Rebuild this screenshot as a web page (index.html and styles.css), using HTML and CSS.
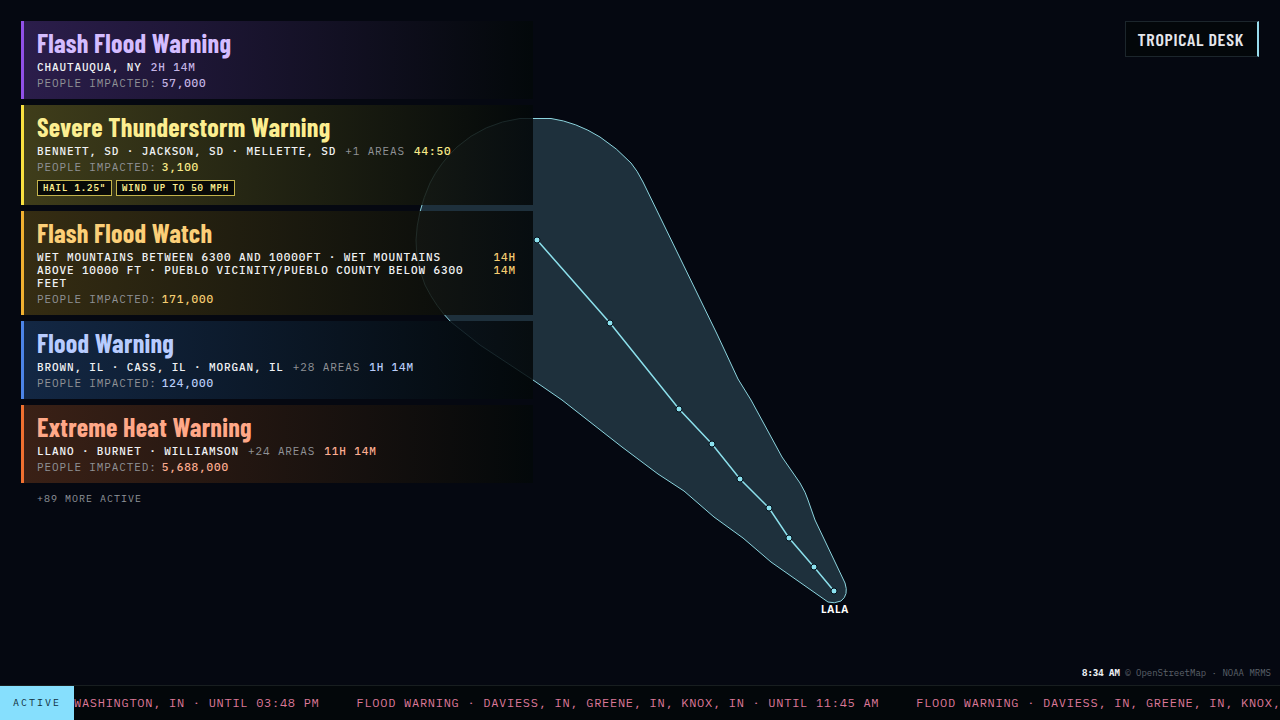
FILE: index.html
```html
<!DOCTYPE html>
<html lang="en">

<head>
    <meta charset="UTF-8">
    <meta name="viewport" content="width=device-width, initial-scale=1.0">
    <title>Tropical Desk</title>
    <link rel="stylesheet" href="styles.css">
</head>

<body>
    <svg class="map" viewBox="0 0 1280 720" preserveAspectRatio="xMidYMid slice" role="img" aria-label="Forecast cone for Lala">
        <path class="cone" d="M520 118.500 L551 118.500 Q576 122 600 137 Q617 148 631 163 Q637 170 643 182 L717 334 L738 379 L751 400 L782 457 L800 483 Q806 493 808 500 L815 520 L845 583 Q849 595 841 601 Q834 604 828 602 L771 562 L743 538 L714 517 L684 491 L658 474 L622 447 L562 400 L533 380 L480 345 L451 322 Q436 307 425 285 Q416 262 416 240 Q417 212 430 183 Q440 163 457 147 Q484 123 520 118.500 Z"/>
        <polyline class="track" points="537,240 610,323 679,409 712,444 740,479 769,508 789,538 814,567 834,591"/>
        <g class="points">
            <circle cx="537" cy="240" r="3"/>
            <circle cx="610" cy="323" r="3"/>
            <circle cx="679" cy="409" r="3"/>
            <circle cx="712" cy="444" r="3"/>
            <circle cx="740" cy="479" r="3"/>
            <circle cx="769" cy="508" r="3"/>
            <circle cx="789" cy="538" r="3"/>
            <circle cx="814" cy="567" r="3"/>
            <circle cx="834" cy="591" r="3"/>
        </g>
        <text class="storm-name" x="835" y="613">LALA</text>
    </svg>

    <main class="overlay">
        <section class="alerts">
            <article class="alert flash-flood">
                <h2>Flash Flood Warning</h2>
                <div class="meta">
                    <span class="areas">CHAUTAUQUA, NY</span>
                    <span class="timer">2H 14M</span>
                </div>
                <p class="impact">PEOPLE IMPACTED: <b>57,000</b></p>
            </article>
            <article class="alert thunderstorm">
                <h2>Severe Thunderstorm Warning</h2>
                <div class="meta">
                    <span class="areas">BENNETT, SD · JACKSON, SD · MELLETTE, SD</span>
                    <span class="more">+1 AREAS</span>
                    <span class="timer">44:50</span>
                </div>
                <p class="impact">PEOPLE IMPACTED: <b>3,100</b></p>
                <div class="tags">
                    <span class="tag">HAIL 1.25"</span>
                    <span class="tag">WIND UP TO 50 MPH</span>
                </div>
            </article>
            <article class="alert watch">
                <h2>Flash Flood Watch</h2>
                <div class="meta">
                    <span class="areas">WET MOUNTAINS BETWEEN 6300 AND 10000FT · WET MOUNTAINS ABOVE 10000 FT · PUEBLO VICINITY/PUEBLO COUNTY BELOW 6300 FEET</span>
                    <span class="timer">14H 14M</span>
                </div>
                <p class="impact">PEOPLE IMPACTED: <b>171,000</b></p>
            </article>
            <article class="alert flood">
                <h2>Flood Warning</h2>
                <div class="meta">
                    <span class="areas">BROWN, IL · CASS, IL · MORGAN, IL</span>
                    <span class="more">+28 AREAS</span>
                    <span class="timer">1H 14M</span>
                </div>
                <p class="impact">PEOPLE IMPACTED: <b>124,000</b></p>
            </article>
            <article class="alert heat">
                <h2>Extreme Heat Warning</h2>
                <div class="meta">
                    <span class="areas">LLANO · BURNET · WILLIAMSON</span>
                    <span class="more">+24 AREAS</span>
                    <span class="timer">11H 14M</span>
                </div>
                <p class="impact">PEOPLE IMPACTED: <b>5,688,000</b></p>
            </article>
            <p class="more-active">+89 MORE ACTIVE</p>
        </section>
        <h1 class="desk">TROPICAL DESK</h1>
    </main>

    <p class="credit"><time>8:34 AM</time> © OpenStreetMap · NOAA MRMS</p>

    <footer class="ticker">
        <span class="ticker-label">ACTIVE</span>
        <div class="ticker-track">
            <span>WASHINGTON, IN · UNTIL 03:48 PM</span>
            <span>FLOOD WARNING · DAVIESS, IN, GREENE, IN, KNOX, IN · UNTIL 11:45 AM</span>
            <span>FLOOD WARNING · DAVIESS, IN, GREENE, IN, KNOX, IN · UNTIL 11:45 AM</span>
        </div>
    </footer>
</body>

</html>
```

FILE: styles.css
```css
* {
    box-sizing: border-box;
}

body {
    margin: 0;
    min-height: 100vh;
    display: flex;
    flex-direction: column;
    position: relative;
    overflow: hidden;
    background: #050811;
    color: #f0f2f4;
    font-family: 'IBM Plex Mono', 'Liberation Mono', monospace;
    font-size: 11px;
    line-height: 13px;
}

h1, h2, p {
    margin: 0;
}

/* map layer under the panels */
.map {
    position: absolute;
    inset: 0;
    width: 100%;
    height: 100%;
}

.cone {
    fill: #1e303c;
    stroke: #8cd4de;
    stroke-width: 1;
}

.track {
    fill: none;
    stroke: #8ce0ec;
    stroke-width: 1.5;
}

.points circle {
    fill: #8ce2f0;
    stroke: #04101a;
    stroke-width: 1;
}

.storm-name {
    fill: #fff;
    font-family: 'Noto Sans', sans-serif;
    font-size: 10px;
    font-weight: 700;
    letter-spacing: 0.08em;
    text-anchor: middle;
}

.overlay {
    position: relative;
    flex: 1;
    display: flex;
    justify-content: space-between;
    align-items: flex-start;
    padding: 21px 21px 0;
}

.alerts {
    width: 40vw;
    display: flex;
    flex-direction: column;
    gap: 6px;
}

.alert {
    padding: 8px 17px 9px 13px;
    border-left: 3px solid var(--accent);
    background: linear-gradient(90deg, var(--tint), transparent), rgba(4, 8, 9, 0.86);
}

.flash-flood {
    --accent: #9050e8;
    --tint: rgba(120, 70, 200, 0.34);
    --title: #d4bcff;
    --value: #c4b4e4;
}

.thunderstorm {
    --accent: #f8e040;
    --tint: rgba(170, 155, 55, 0.36);
    --title: #fcee90;
    --value: #f8ea88;
}

.watch {
    --accent: #f0b030;
    --tint: rgba(150, 115, 35, 0.34);
    --title: #fccf78;
    --value: #f4cc70;
}

.flood {
    --accent: #4c84e8;
    --tint: rgba(50, 100, 180, 0.34);
    --title: #b8ccff;
    --value: #b8ccf8;
}

.heat {
    --accent: #f07030;
    --tint: rgba(165, 80, 45, 0.34);
    --title: #ffa888;
    --value: #fcac90;
}

.alert h2 {
    color: var(--title);
    font-family: 'Barlow Condensed', 'Liberation Sans Narrow', 'Roboto Condensed', 'Liberation Sans', sans-serif;
    font-size: 26px;
    font-weight: 700;
    line-height: 28px;
    letter-spacing: 0.01em;
}

.meta {
    display: flex;
    gap: 9px;
    margin-top: 4px;
    font-weight: 500;
    letter-spacing: 0.08em;
}

.more {
    color: #909296;
    font-weight: 400;
}

.timer {
    color: var(--value);
}

.watch .timer {
    width: min-content;
    margin-left: auto;
}

.impact {
    display: flex;
    gap: 5px;
    margin-top: 3px;
    color: #909296;
    letter-spacing: 0.08em;
}

.impact b {
    color: var(--value);
    font-weight: 500;
}

.tags {
    display: flex;
    gap: 4px;
    margin-top: 6px;
}

.tag {
    padding: 0 5px;
    border: 1px solid #c4b44c;
    background: #080a08;
    color: #fcee90;
    font-size: 9px;
    font-weight: 600;
    line-height: 14px;
    letter-spacing: 0.1em;
}

.more-active {
    padding: 3px 16px;
    color: #90949a;
    font-size: 10px;
    letter-spacing: 0.1em;
}

.desk {
    padding: 0 13px 0 12px;
    border: 1px solid #1c262c;
    border-right: 2px solid #98dcec;
    background: #03070a;
    color: #e4e6ec;
    font-family: 'Barlow Condensed', 'Liberation Sans Narrow', 'Roboto Condensed', 'Liberation Sans', sans-serif;
    font-size: 18px;
    font-weight: 600;
    line-height: 34px;
    letter-spacing: 0.04em;
}

.credit {
    position: relative;
    padding: 0 9px 6px;
    color: #5c626a;
    font-size: 9px;
    text-align: right;
}

.credit time {
    color: #eceef2;
    font-weight: 700;
}

.ticker {
    position: relative;
    display: flex;
    border-top: 1px solid #181e20;
    background: #03070a;
    line-height: 34px;
}

.ticker-label {
    padding: 0 13px;
    background: #86dffd;
    color: #123040;
    font-size: 10px;
    letter-spacing: 0.2em;
}

.ticker-track {
    flex: 1;
    display: flex;
    gap: 37px;
    overflow: hidden;
    color: #dc7898;
    font-size: 12px;
    letter-spacing: 0.06em;
    white-space: nowrap;
}
```
